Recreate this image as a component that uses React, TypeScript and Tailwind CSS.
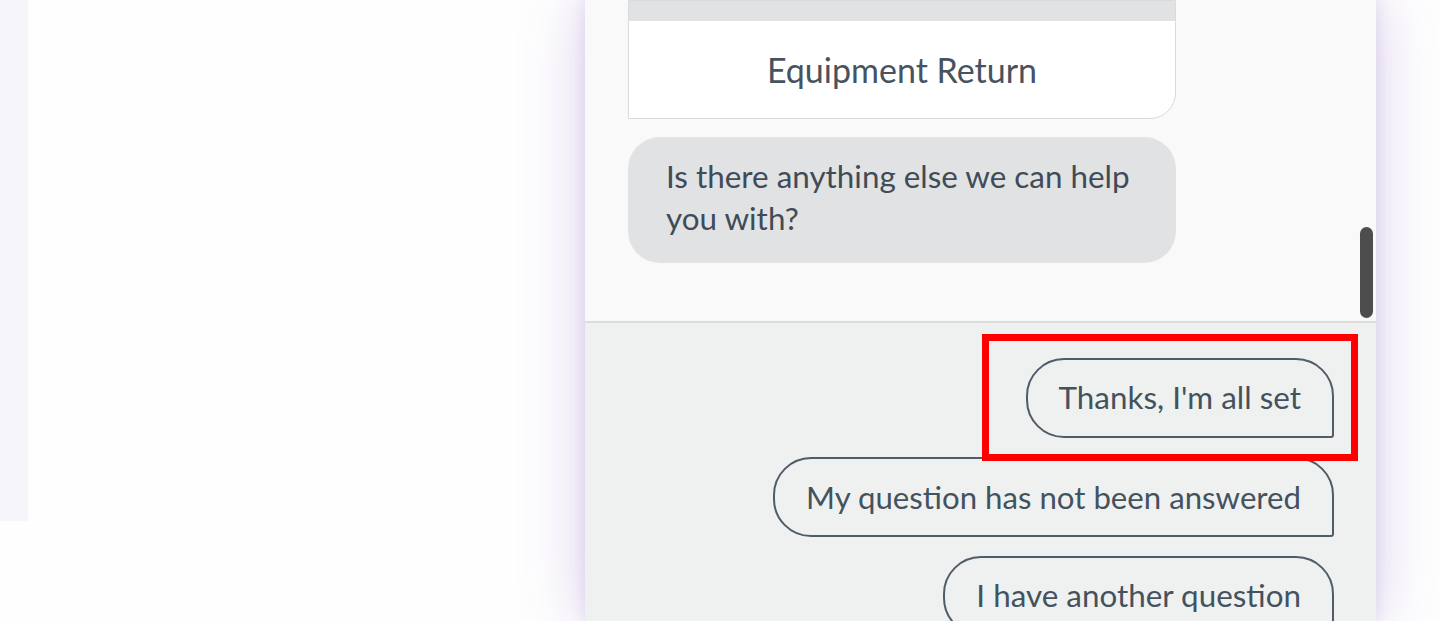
import React from "react";

export default function App() {
  const font = { fontFamily: "Lato, 'Noto Sans', sans-serif" };
  return (
    <div className="flex w-[1440px] h-[621px] overflow-hidden bg-[#fefefe]" style={font}>
      <div className="w-[28px] h-[521px] shrink-0 bg-[#f6f5fa]" />
      <div className="w-[557px] shrink-0" />
      <div className="w-[791px] shrink-0 h-[621px] flex flex-col bg-[#f9f9f9] shadow-[0_0_60px_rgba(140,100,200,0.30),0_0_14px_rgba(140,100,200,0.18)]">
        <div className="relative h-[323px] shrink-0 border-b-2 border-[#dadddc] pl-[43px] flex flex-col gap-[18px]">
          <div className="w-[548px] border border-[#d9dadc] rounded-br-[26px] bg-white overflow-hidden">
            <div className="h-[20px] bg-[#e1e2e4]" />
            <div className="h-[97px] flex items-center justify-center text-[34px] text-[#47535e]">
              Equipment Return
            </div>
          </div>
          <div className="w-[548px] h-[126px] rounded-[32px] bg-[#e1e2e4] pl-[38px] pr-[30px] pt-[18px] text-[31.4px] leading-[42px] text-[#3f4b56]">
            Is there anything else we can help you with?
          </div>
          <div className="absolute left-[775px] top-[227px] w-[13px] h-[91px] rounded-full bg-[#4d4d4d]" />
        </div>
        <div className="flex-1 bg-[#eff1f0] flex flex-col items-end pr-[42px] pt-[35px] gap-[19px]">
          <div className="relative">
            <div className="absolute -right-[24px] -top-[24px] w-[376px] h-[127px] border-[7px] border-[#ff0000]" />
            <button className="h-[80px] px-[31px] rounded-tl-[38px] rounded-tr-[38px] rounded-bl-[38px] rounded-br-[3px] border-2 border-[#4f5d68] text-[31.4px] text-[#44525e] whitespace-nowrap" style={font}>
              Thanks, I'm all set
            </button>
          </div>
          <button className="h-[80px] px-[31px] rounded-tl-[38px] rounded-tr-[38px] rounded-bl-[38px] rounded-br-[3px] border-2 border-[#4f5d68] text-[31.2px] text-[#44525e] whitespace-nowrap" style={font}>
            My question has not been answered
          </button>
          <button className="h-[80px] shrink-0 px-[31px] rounded-tl-[38px] rounded-tr-[38px] rounded-bl-[38px] rounded-br-[3px] border-2 border-[#4f5d68] text-[31.4px] text-[#44525e] whitespace-nowrap" style={font}>
            I have another question
          </button>
        </div>
      </div>
    </div>
  );
}
